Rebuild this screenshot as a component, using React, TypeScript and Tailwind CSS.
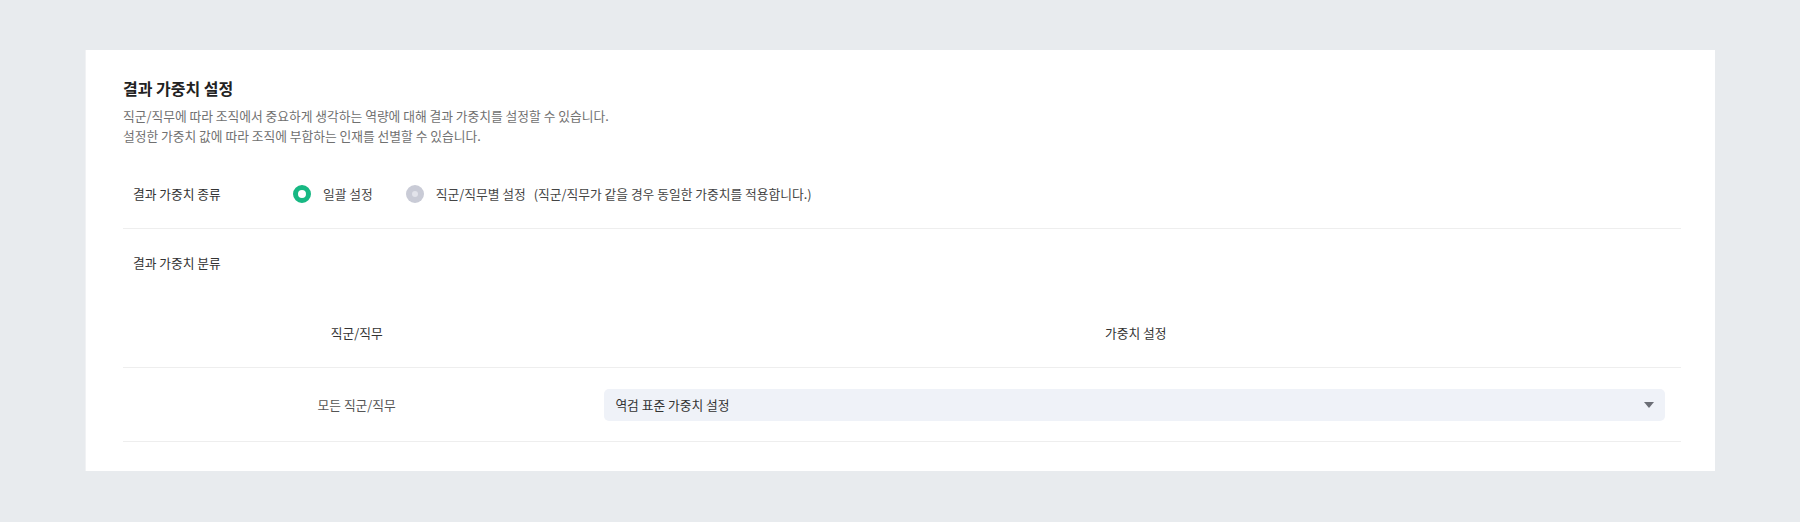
const FONT = '"Noto Sans CJK KR", "Noto Sans", sans-serif';

function Radio({ checked, label, note }: { checked: boolean; label: string; note?: string }) {
  return (
    <label className="flex items-center gap-[12px] cursor-pointer">
      {checked ? (
        <span className="w-[18px] h-[18px] rounded-full border-[5px] border-[#17b883] bg-white" />
      ) : (
        <span className="w-[18px] h-[18px] rounded-full bg-[#c9cbd6] flex items-center justify-center">
          <span className="w-[6px] h-[6px] rounded-full bg-[#e2e3ea]" />
        </span>
      )}
      <span className="text-[12.75px] text-[#444]">
        {label}
        {note && <span className="ml-[8px]">{note}</span>}
      </span>
    </label>
  );
}

export default function App() {
  return (
    <div className="min-h-[522px] bg-[#e8ebee] px-[85px] pt-[50px] pb-[50px]" style={{ fontFamily: FONT }}>
      <div className="bg-white pl-[37px] pr-[34px] pt-[26px] pb-[29px] border-l border-[#f1f2f4]">
        {/* Header */}
        <h2 className="text-[16px] leading-[24px] font-bold text-[#222]">결과 가중치 설정</h2>
        <div className="mt-[6px] text-[12.75px] leading-[20px] text-[#707070]">
          <p>직군/직무에 따라 조직에서 중요하게 생각하는 역량에 대해 결과 가중치를 설정할 수 있습니다.</p>
          <p>설정한 가중치 값에 따라 조직에 부합하는 인재를 선별할 수 있습니다.</p>
        </div>

        {/* Type */}
        <div className="mt-[13px] h-[70px] flex items-center border-b border-[#eeeeee]">
          <div className="w-[170px] pl-[10px] text-[12.75px] text-[#333]">결과 가중치 종류</div>
          <div className="flex items-center gap-[33px]">
            <Radio checked label="일괄 설정" />
            <Radio checked={false} label="직군/직무별 설정" note="(직군/직무가 같을 경우 동일한 가중치를 적용합니다.)" />
          </div>
        </div>

        {/* Category */}
        <div className="pt-[24px] pl-[10px] text-[12.75px] leading-[20px] text-[#333]">결과 가중치 분류</div>

        <div className="mt-[25px]">
          <div className="grid grid-cols-[30%_70%] h-[70px] items-center border-b border-[#eeeeee] text-[12.75px] text-[#333]">
            <div className="text-center">직군/직무</div>
            <div className="text-center">가중치 설정</div>
          </div>
          <div className="grid grid-cols-[30%_70%] h-[74px] items-center border-b border-[#eeeeee]">
            <div className="text-center text-[12.75px] text-[#555]">모든 직군/직무</div>
            <div className="pl-[14px] pr-[16px]">
              <button className="w-full h-[32px] rounded-[5px] bg-[#eff2f8] flex items-center justify-between pl-[11px] pr-[11px] text-[12.75px] text-[#333]">
                <span>역검 표준 가중치 설정</span>
                <svg width="10" height="6" viewBox="0 0 10 6">
                  <path d="M0 0 H10 L5 6 Z" fill="#6b6e76" />
                </svg>
              </button>
            </div>
          </div>
        </div>
      </div>
    </div>
  );
}
